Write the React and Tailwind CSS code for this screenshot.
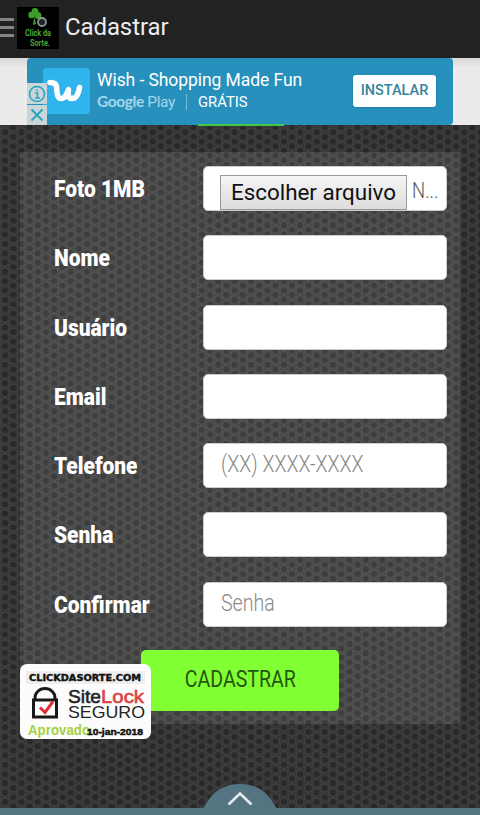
const fields = [
  { label: "Foto 1MB", type: "file" },
  { label: "Nome" },
  { label: "Usuário" },
  { label: "Email" },
  { label: "Telefone", placeholder: "(XX) XXXX-XXXX" },
  { label: "Senha" },
  { label: "Confirmar", placeholder: "Senha" },
];

/** Dark mesh of linked rings behind the whole page */
function MeshBackground() {
  return (
    <svg className="absolute inset-0 w-full h-full" aria-hidden="true">
      <defs>
        <pattern id="mesh" x="5" y="2" width="16.4" height="9.3" patternUnits="userSpaceOnUse">
          <rect width="16.4" height="9.3" fill="#303030" />
          <g fill="#292929" stroke="#444444" strokeWidth="1.1">
            <circle cx="8.2" cy="4.65" r="3.9" />
            <circle cx="0" cy="0" r="3.9" />
            <circle cx="16.4" cy="0" r="3.9" />
            <circle cx="0" cy="9.3" r="3.9" />
            <circle cx="16.4" cy="9.3" r="3.9" />
          </g>
        </pattern>
      </defs>
      <rect width="100%" height="100%" fill="url(#mesh)" />
    </svg>
  );
}

function Header() {
  return (
    <header className="relative flex items-center h-[58px] bg-[#222222] pb-1">
      <div className="flex flex-col gap-[5px] w-[14px]">
        <span className="h-[3px] bg-[#858585]" />
        <span className="h-[3px] bg-[#858585]" />
        <span className="h-[3px] bg-[#858585]" />
      </div>
      <svg width="42" height="42" viewBox="0 0 42 42" className="ml-[3px] mt-px shrink-0 bg-black">
        <g fill="#3c9d2b">
          <circle cx="18" cy="4.5" r="3.4" />
          <circle cx="14.500" cy="8" r="3.2" />
          <circle cx="21" cy="8.500" r="3.4" />
          <path d="M17 8l2 9-3 1 1-7z" />
        </g>
        <circle cx="25" cy="15" r="4" fill="#222222" stroke="#8e9692" strokeWidth="1.8" />
        <g fill="#46a834" fontFamily="Roboto, sans-serif" fontWeight="bold" fontSize="8.5">
          <text x="8" y="28.500" textLength="26" lengthAdjust="spacingAndGlyphs">Click da</text>
          <text x="13" y="38.500" textLength="20" lengthAdjust="spacingAndGlyphs">Sorte.</text>
        </g>
      </svg>
      <h1 className="ml-[6px] text-[24px] leading-none text-[#ededed] tracking-[-0.1px]">Cadastrar</h1>
    </header>
  );
}

function AdBanner() {
  return (
    <div className="relative h-[67px] bg-linear-to-b from-[#d8d8d8] to-[#ebebeb] to-15% px-[27px]">
      <div className="relative h-full bg-[#2790bd] rounded-sm flex items-start">
        <div className="ml-4 mt-[10px] w-[47px] h-[46px] rounded-[4px] bg-[#2fb4ec]">
          <svg width="47" height="46" viewBox="0 0 47 46">
            <path
              d="M7 14.500c4 0 6 1 6.500 4 .5 4 0 12 4.500 12 4.500 0 6-5 7.500-9-1 5-.5 9 3.500 9 5 0 6.500-5 7.500-11"
              fill="none"
              stroke="white"
              strokeWidth="5.5"
              strokeLinecap="round"
              strokeLinejoin="round"
            />
          </svg>
        </div>
        <div className="ml-[7px] mt-3 text-white">
          <p className="text-[17.5px] leading-5 whitespace-nowrap tracking-[-0.07px]">Wish - Shopping Made Fun</p>
          <p className="flex items-center leading-[22px] text-[14.8px] whitespace-nowrap">
            <span className="w-[77px] text-[#a4d6ec] text-[15.5px] tracking-[-0.4px]">
              <span className="font-['Lato',sans-serif] font-bold">Google</span> Play
            </span>
            <span className="ml-[12px] h-4 w-px bg-[#73bbdb]" />
            <span className="ml-[11px]">GRÁTIS</span>
          </p>
        </div>
        <button className="absolute left-[326px] top-[17px] w-[83px] h-[32px] rounded-[3px] bg-white shadow text-[14.5px] font-medium text-[#34849b]">
          INSTALAR
        </button>
      </div>
      <div className="absolute left-[27px] top-[25px] flex flex-col gap-px">
        <span className="w-5 h-[21px] bg-[#c9d5d9] flex items-center justify-center">
          <svg width="18" height="18" viewBox="0 0 18 18" fill="none" stroke="#22a5be" strokeWidth="1.5">
            <circle cx="9" cy="9" r="7.500" />
            <path d="M7 8h2.500v5M7 13h5M9 4.500v1.800" />
          </svg>
        </span>
        <span className="w-5 h-5 bg-[#c9d5d9] flex items-center justify-center">
          <svg width="14" height="14" viewBox="0 0 14 14" fill="none" stroke="#22a5be" strokeWidth="1.8">
            <path d="M1.500 1.500l11 11M12.500 1.500l-11 11" />
          </svg>
        </span>
      </div>
      <div className="absolute left-[198px] bottom-[-1px] w-[86px] h-[2px] bg-[#43c84a]" />
    </div>
  );
}

function Field({ label, type, placeholder }) {
  return (
    <div className="flex items-center h-[45px]">
      <label className="w-[149px] shrink-0 text-white font-black text-[24px] pt-px">
        <span className="inline-block origin-left scale-x-[0.873] whitespace-nowrap">{label}</span>
      </label>
      <div className="w-[244px] h-[45px] rounded-[5px] bg-white border border-[#cccccc] pl-4 flex items-center overflow-hidden">
        {type === "file" ? (
          <>
            <button className="mt-[7px] w-[187px] h-[35px] shrink-0 border border-[#999999] bg-linear-to-b from-[#f5f5f5] to-[#dddddd] text-[22.4px] leading-none text-[#111111] whitespace-nowrap">
              Escolher arquivo
            </button>
            <span className="ml-[5px] mt-1 text-[22px] font-light text-[#555555] inline-block origin-left scale-x-[0.84]">
              N...
            </span>
          </>
        ) : (
          <span className="ml-px text-[23px] font-light text-[#888888] inline-block origin-left scale-x-[0.852] whitespace-nowrap">
            {placeholder}
          </span>
        )}
      </div>
    </div>
  );
}

function SiteLockBadge() {
  return (
    <div className="absolute left-[20px] top-[664px] w-[131px] h-[75px] rounded-[7px] bg-[#fcfcfc]">
      <svg width="131" height="75" viewBox="0 0 131 75" fontFamily="Liberation Sans, sans-serif">
        <rect x="6" y="7" width="119" height="13" fill="#eeeeee" />
        <text x="9" y="16.500" fontFamily="DejaVu Sans, sans-serif" fontSize="9" fontWeight="bold" textLength="112" lengthAdjust="spacingAndGlyphs" fill="#111111" stroke="#111111" strokeWidth="0.4">CLICKDASORTE.COM</text>
        <path d="M15 36v-2a10 9.500 0 0 1 20 0v2" fill="none" stroke="#181818" strokeWidth="3" />
        <rect x="13.500" y="36" width="23" height="17" fill="white" stroke="#181818" strokeWidth="3" />
        <path d="M20 43.500l5 5 8-11" fill="none" stroke="#e02d36" strokeWidth="3" />
        <text x="48" y="39" fontSize="19" stroke="#242424" strokeWidth="0.6" textLength="33" lengthAdjust="spacingAndGlyphs" fill="#242424">Site</text>
        <text x="81" y="39" fontSize="19" stroke="#df3f46" strokeWidth="0.6" textLength="43" lengthAdjust="spacingAndGlyphs" fill="#df3f46">Lock</text>
        <text x="48" y="54" fontSize="17" textLength="77" lengthAdjust="spacingAndGlyphs" fill="#242424">SEGURO</text>
        <text x="8" y="71" fontSize="14" fontWeight="bold" textLength="62" lengthAdjust="spacingAndGlyphs" fill="#a5d042">Aprovado</text>
        <text x="67" y="71" fontSize="9.500" fontWeight="bold" textLength="56" lengthAdjust="spacingAndGlyphs" fill="#111111" stroke="#111111" strokeWidth="0.5">10-jan-2018</text>
      </svg>
    </div>
  );
}

export default function App() {
  return (
    <div className="relative w-[480px] h-[815px] overflow-hidden bg-[#2b2b2b] font-['Roboto',sans-serif]">
      <MeshBackground />
      <Header />
      <AdBanner />
      <main className="relative mt-[27px] ml-5 w-[440px] h-[572px] bg-white/10 pt-[14px] pl-[34px]">
        <div className="flex flex-col gap-[24.3px]">
          {fields.map((field) => (
            <Field key={field.label} {...field} />
          ))}
        </div>
        <button className="mt-[23px] ml-[87px] w-[198px] h-[61px] rounded-[5px] bg-[#80ff33] text-[23px] text-[#26550f] flex items-center justify-center">
          <span className="inline-block scale-x-[0.85]">CADASTRAR</span>
        </button>
      </main>
      <SiteLockBadge />
      <div className="absolute inset-x-0 bottom-0 h-[7px] bg-[#547481]" />
      <svg className="absolute left-[200px] bottom-0" width="80" height="32" viewBox="0 0 80 32">
        <path d="M0 32v-5c3 0 4-3 6-6C14 7 25 1 40 1s26 6 34 20c2 3 3 6 6 6v5z" fill="#547481" />
        <path d="M28.500 21.500L40 10.500l11.500 11" fill="none" stroke="#e5eaed" strokeWidth="2.6" />
      </svg>
    </div>
  );
}
